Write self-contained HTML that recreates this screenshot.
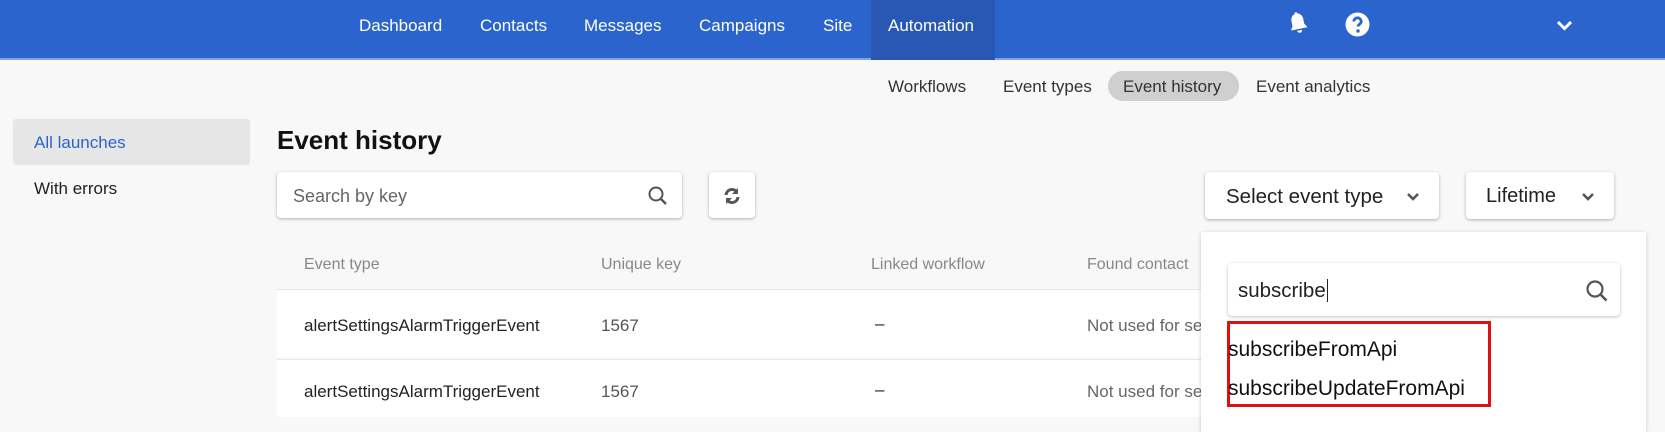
<!DOCTYPE html>
<html><head><style>
*{margin:0;padding:0;box-sizing:border-box}
body{width:1665px;height:417px;overflow:hidden;background:#f8f8f8;font-family:"Liberation Sans",Arial,sans-serif;position:relative}
.a{position:absolute;white-space:nowrap}
.nav{position:absolute;left:0;top:0;width:1665px;height:60px;background:#2b64cd;border-bottom:2px solid #7fa3e0}
.ni{position:absolute;top:16px;color:#fff;font-size:17px}
.card{position:absolute;background:#fff;border-radius:4px;box-shadow:0 1px 3px rgba(0,0,0,.3)}
.th{position:absolute;top:256px;color:#888;font-size:16px}
.td{position:absolute;font-size:17px;color:#222}
</style></head><body>
<div class="nav">
<div style="position:absolute;left:871px;top:0;width:124px;height:60px;background:#2857b4"></div>
<span class="ni" style="left:359px">Dashboard</span>
<span class="ni" style="left:480px">Contacts</span>
<span class="ni" style="left:584px">Messages</span>
<span class="ni" style="left:699px">Campaigns</span>
<span class="ni" style="left:823px">Site</span>
<span class="ni" style="left:888px">Automation</span>
<svg class="a" style="left:1286px;top:10px" width="24" height="26" viewBox="0 0 24 26"><path d="M12 2c-1 0-1.5.8-1.5 1.6C7.5 4.4 6 7 6 10v5l-2 3v1h16v-1l-2-3v-5c0-3-1.5-5.6-4.5-6.4C13.5 2.8 13 2 12 2z M9.5 20.5a2.5 2.5 0 0 0 5 0z" fill="#fff" transform="rotate(-12 12 13)"/></svg>
<svg class="a" style="left:1345px;top:12px" width="25" height="25" viewBox="0 0 25 25"><circle cx="12.5" cy="12.5" r="12" fill="#fff"/><path d="M8.8 9.5a3.7 3.7 0 0 1 7.4 0c0 2.5-3.2 2.8-3.2 5" stroke="#2b64cd" stroke-width="2.8" fill="none"/><circle cx="13" cy="19" r="1.7" fill="#2b64cd"/></svg>
<svg class="a" style="left:1556px;top:20px" width="17" height="12" viewBox="0 0 17 12"><path d="M2 2l6.5 6.5L15 2" stroke="#fff" stroke-width="3" fill="none"/></svg>
</div>
<div class="a" style="left:1108px;top:71px;width:131px;height:30px;border-radius:15px;background:#cfcfcf"></div>
<span class="a" style="left:888px;top:77px;font-size:17px;color:#333">Workflows</span>
<span class="a" style="left:1003px;top:77px;font-size:17px;color:#333">Event types</span>
<span class="a" style="left:1123px;top:77px;font-size:17px;color:#333">Event history</span>
<span class="a" style="left:1256px;top:77px;font-size:17px;color:#333">Event analytics</span>
<div class="a" style="left:13px;top:119px;width:237px;height:46px;border-radius:3px;background:#e6e6e6"></div>
<span class="a" style="left:34px;top:133px;font-size:17px;color:#2b64cd">All launches</span>
<span class="a" style="left:34px;top:179px;font-size:17px;color:#222">With errors</span>
<span class="a" style="left:277px;top:125px;font-size:26px;font-weight:bold;color:#111">Event history</span>
<div class="card" style="left:277px;top:172px;width:405px;height:46px"></div>
<span class="a" style="left:293px;top:186px;font-size:18px;color:#666">Search by key</span>
<svg class="a" style="left:647px;top:185px" width="22" height="22" viewBox="0 0 22 22"><circle cx="9" cy="9" r="6.5" stroke="#555" stroke-width="2" fill="none"/><path d="M14 14l5 5" stroke="#555" stroke-width="2.4"/></svg>
<div class="card" style="left:709px;top:172px;width:46px;height:46px"></div>
<svg class="a" style="left:722px;top:186px" width="20" height="20" viewBox="0 0 20 20"><path d="M4 9a6 6 0 0 1 10.5-3.5" stroke="#555" stroke-width="3" fill="none"/><path d="M16 2v6h-6z" fill="#555"/><path d="M16 11a6 6 0 0 1-10.5 3.5" stroke="#555" stroke-width="3" fill="none"/><path d="M4 18v-6h6z" fill="#555"/></svg>
<div class="card" style="left:1205px;top:172px;width:234px;height:47px"></div>
<span class="a" style="left:1226px;top:185px;font-size:20.5px;color:#222">Select event type</span>
<svg class="a" style="left:1406px;top:192px" width="14" height="10" viewBox="0 0 14 10"><path d="M2 2l5 5 5-5" stroke="#555" stroke-width="2.6" fill="none"/></svg>
<div class="card" style="left:1466px;top:172px;width:148px;height:47px"></div>
<span class="a" style="left:1486px;top:185px;font-size:20px;color:#222">Lifetime</span>
<svg class="a" style="left:1581px;top:192px" width="14" height="10" viewBox="0 0 14 10"><path d="M2 2l5 5 5-5" stroke="#555" stroke-width="2.6" fill="none"/></svg>
<span class="th" style="left:304px">Event type</span>
<span class="th" style="left:601px">Unique key</span>
<span class="th" style="left:871px">Linked workflow</span>
<span class="th" style="left:1087px">Found contact</span>
<div class="a" style="left:277px;top:289px;width:930px;height:68px;background:#fff;border-top:1px solid #e6e6e6"></div>
<div class="a" style="left:277px;top:359px;width:930px;height:58px;background:#fff;border-top:1px solid #e6e6e6"></div>
<span class="td" style="left:304px;top:316px">alertSettingsAlarmTriggerEvent</span>
<span class="td" style="left:601px;top:316px;color:#555">1567</span>
<span class="td" style="left:875px;top:314px">–</span>
<span class="td" style="left:1087px;top:316px;color:#666">Not used for se</span>
<span class="td" style="left:304px;top:382px">alertSettingsAlarmTriggerEvent</span>
<span class="td" style="left:601px;top:382px;color:#555">1567</span>
<span class="td" style="left:875px;top:380px">–</span>
<span class="td" style="left:1087px;top:382px;color:#666">Not used for se</span>
<div class="a" style="left:1201px;top:232px;width:445px;height:200px;background:#fff;box-shadow:0 1px 4px rgba(0,0,0,.2)"></div>
<div class="card" style="left:1228px;top:263px;width:392px;height:53px;box-shadow:0 1px 3px rgba(0,0,0,.25)"></div>
<span class="a" style="left:1238px;top:279px;font-size:20.5px;color:#222">subscribe<span style="border-left:1.5px solid #222;margin-left:1px"></span></span>
<svg class="a" style="left:1585px;top:279px" width="24" height="24" viewBox="0 0 24 24"><circle cx="10" cy="10" r="7.5" stroke="#555" stroke-width="2.2" fill="none"/><path d="M15.5 15.5l6 6" stroke="#555" stroke-width="2.6"/></svg>
<div class="a" style="left:1227px;top:321px;width:264px;height:86px;border:3px solid #e01010"></div>
<span class="a" style="left:1228px;top:338px;font-size:21px;color:#111">subscribeFromApi</span>
<span class="a" style="left:1228px;top:377px;font-size:21px;color:#111">subscribeUpdateFromApi</span>
</body></html>
